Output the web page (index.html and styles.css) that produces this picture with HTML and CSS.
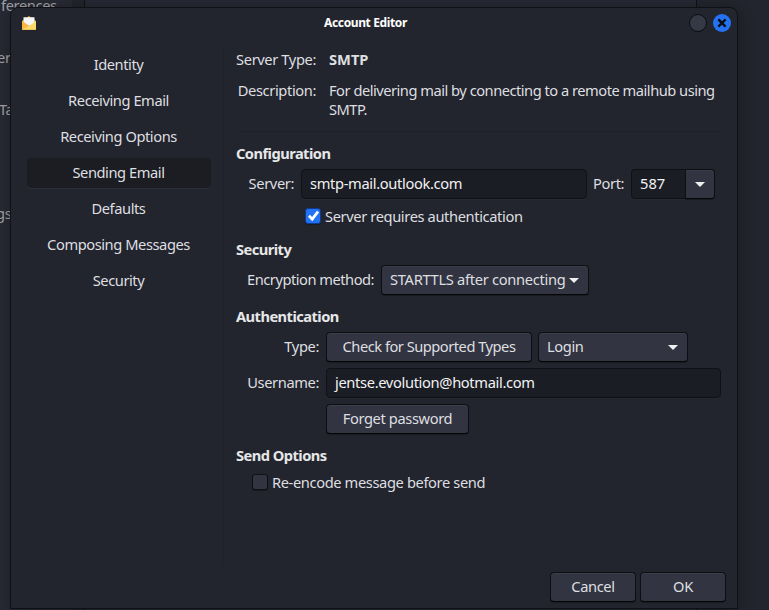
FILE: index.html
```html
<!DOCTYPE html>
<html lang="en">
<head>
<meta charset="utf-8">
<title>Account Editor</title>
<link rel="stylesheet" href="styles.css">
</head>
<body>
<div class="backdrop">
  <div class="back-side">
    <span class="ghost ghost-a">ferences</span>
    <span class="ghost ghost-b">er</span>
    <span class="ghost ghost-c">Ta</span>
    <span class="ghost ghost-d">gs</span>
  </div>
  <div class="back-scroll"></div>
  <div class="back-main"></div>
</div>
<main class="dialog">
  <header class="titlebar">
    <svg class="app-icon" width="14" height="14" viewBox="0 0 14 14">
      <path d="M0 5 7 0l7 5v3H0z" fill="#d9a520"/>
      <path d="M1.5 1.2h11V8L7 10 1.5 8z" fill="#f6f5f8"/>
      <path d="M0 5l7 5 7-5v9H0z" fill="#fbdc6b"/>
      <path d="M0 5l7 4.7L0 14z" fill="#f9b545"/>
      <path d="M0 13.3h14v.7H0z" fill="#e8b84b"/>
    </svg>
    <h1 class="title">Account Editor</h1>
    <div class="window-buttons">
      <span class="win-btn"></span>
      <span class="win-btn close"><svg width="18" height="18" viewBox="0 0 18 18"><path d="M6.2 6.2l5.6 5.6M11.8 6.2l-5.6 5.6" stroke="#0b0d12" stroke-width="2.4" stroke-linecap="square"/></svg></span>
    </div>
  </header>
  <div class="body">
    <nav class="sidebar">
      <a class="tab">Identity</a>
      <a class="tab">Receiving Email</a>
      <a class="tab">Receiving Options</a>
      <a class="tab active">Sending Email</a>
      <a class="tab">Defaults</a>
      <a class="tab">Composing Messages</a>
      <a class="tab">Security</a>
    </nav>
    <section class="page">
      <dl class="summary">
        <dt>Server Type:</dt><dd class="strong">SMTP</dd>
        <dt>Description:</dt><dd class="tight">For delivering mail by connecting to a remote mailhub using<br>SMTP.</dd>
      </dl>
      <h2 class="heading">Configuration</h2>
      <div class="row server-row">
        <span class="label">Server:</span>
        <div class="entry server">smtp-mail.outlook.com</div>
        <span class="label port-label">Port:</span>
        <div class="combo-entry"><div class="entry port">587</div><div class="button drop"><i class="arrow"></i></div></div>
      </div>
      <div class="row check-row auth">
        <span class="check on"><svg width="14" height="14" viewBox="0 0 14 14"><path d="M3 6.7l3.2 3.4L12 2.6" fill="none" stroke="#fff" stroke-width="2.7"/></svg></span>
        <span class="check-label">Server requires authentication</span>
      </div>
      <h2 class="heading">Security</h2>
      <div class="row">
        <span class="label enc-label tight">Encryption method:</span>
        <div class="button combo enc"><span>STARTTLS after connecting</span><i class="arrow"></i></div>
      </div>
      <h2 class="heading">Authentication</h2>
      <div class="auth-grid">
        <span class="label">Type:</span>
        <div class="type-row">
          <div class="button check-types tight">Check for Supported Types</div>
          <div class="button combo login"><span>Login</span><i class="arrow"></i></div>
        </div>
        <span class="label">Username:</span>
        <div class="entry user">jentse.evolution@hotmail.com</div>
        <div class="button forget">Forget password</div>
      </div>
      <h2 class="heading">Send Options</h2>
      <div class="row check-row reencode">
        <span class="check"></span>
        <span class="check-label">Re-encode message before send</span>
      </div>
    </section>
  </div>
  <footer class="actions">
    <div class="button action">Cancel</div>
    <div class="button action">OK</div>
  </footer>
</main>
</body>
</html>
```

FILE: styles.css
```css
* { box-sizing: border-box; margin: 0; padding: 0; }
body {
  width: 769px; height: 610px; overflow: hidden; position: relative;
  background: #23252e; color: #dedfe0;
  font: 14.67px/20px "Noto Sans", sans-serif;
  letter-spacing: -0.38px;
}
.tight { letter-spacing: -0.49px; }
.backdrop { position: absolute; inset: 0; display: flex; }
.back-side { width: 72px; background: #272934; position: relative; }
.back-scroll { width: 13px; background: #22242c; border-right: 1px solid #111318; }
.back-main { width: 612px; background: #262833; border-right: 1px solid #0f1116; }
.ghost { position: absolute; color: #a2a3a7; white-space: nowrap; }
.ghost-a { left: 1px; top: -5px; }
.ghost-b { left: -3px; top: 47px; }
.ghost-c { left: -1px; top: 99px; }
.ghost-d { left: -4px; top: 203px; }
.dialog {
  position: relative; display: flex; flex-direction: column;
  width: 728px; height: 602px; margin: 7px 0 0 10px;
  background: #23252e; border: 1px solid #0f1116;
  border-radius: 8px 8px 0 0;
  box-shadow: 0 2px 16px rgba(0,0,0,.3);
}
.titlebar {
  display: grid; grid-template-columns: 60px 1fr 60px; align-items: center;
  height: 30px; padding: 0 6px 0 11px;
}
.title {
  text-align: center; font-size: 12px; line-height: 20px; font-weight: 700; color: #fff;
  padding-right: 22px;
}
.window-buttons { display: flex; gap: 6px; justify-content: flex-end; }
.win-btn { width: 18px; height: 18px; border-radius: 50%; background: #353945; border: 1px solid #0b0d11; }
.win-btn.close { background: #2472f4; border: 0; }
.win-btn svg, .app-icon, .check svg { display: block; }
.body { display: flex; height: 528px; }
.sidebar {
  flex: none; width: 213px; height: 518px; margin-top: 10px; padding: 2px 12px 0 16px;
  border-right: 1px solid #20222a; display: flex; flex-direction: column; gap: 6px;
}
.tab { height: 30px; line-height: 29px; padding-right: 1px; letter-spacing: -0.43px; text-align: center; border-radius: 4px; }
.tab.active { background: #1b1d23; box-shadow: 0 1px #2d2f38; }
.page { flex: 1; min-width: 0; padding: 11px 16px 0 12px; }
.summary {
  display: grid; grid-template-columns: 81px 1fr; column-gap: 12px; row-gap: 12px;
  line-height: 19px; padding-top: 1px; height: 83px; align-content: start;
  border-bottom: 1px solid #1f2128;
}
.summary dt { text-align: right; white-space: nowrap; padding-right: 1px; }
.summary dd { white-space: nowrap; }
.strong { font-weight: 700; letter-spacing: 0; }
.heading {
  font-size: 14.67px; line-height: 20px; font-weight: 700; color: #e6e7e8;
  letter-spacing: -0.54px; padding: 11px 0 1px;
}
.row { display: flex; align-items: center; }
.label { white-space: nowrap; text-align: right; padding: 0 1px 2px 0; }
.entry {
  height: 30px; line-height: 26px; padding-left: 8px; color: #f2f2f3; white-space: nowrap;
  letter-spacing: -0.34px;
  background: #1b1d24; border: 1px solid #0f1116; border-radius: 4px; box-shadow: 0 1px #282a33;
}
.button {
  height: 30px; line-height: 27px; text-align: center; white-space: nowrap;
  background: #323541; border: 1px solid #0d0f13; border-bottom-color: #050608; border-radius: 4px;
  box-shadow: inset 0 1px #3b3e4a, 0 1px 1px rgba(0,0,0,.3);
}
.arrow { border: 5px solid transparent; border-top-color: #f0f0f0; border-bottom: 0; width: 0; height: 0; }
.server-row { margin-top: 5px; }
.server-row > .label:first-child { width: 59px; }
.entry.server { width: 286px; margin-left: 6px; }
.port-label { margin: 0 6px; width: 32px; }
.combo-entry { display: flex; }
.entry.port { width: 54px; border-right: 0; border-radius: 4px 0 0 4px; letter-spacing: 0; }
.drop { width: 30px; display: flex; align-items: center; justify-content: center; border-radius: 0 4px 4px 0; padding-right: 1px; }
.check-row { height: 16px; }
.check {
  width: 16px; height: 16px; border-radius: 3px; flex: none;
  background: #323541; border: 1px solid #0d0f13; box-shadow: 0 1px 1px rgba(0,0,0,.3);
}
.check.on { background: #2472f4; border-color: #0f3b8c; }
.check-label { margin-left: 4px; white-space: nowrap; }
.auth { margin: 9px 0 0 69px; }
.auth + .heading { padding-top: 15px; }
.heading + .row:not(.server-row):not(.check-row) { margin-top: 5px; }
.enc-label { width: 139px; margin-right: 6px; }
.combo { display: flex; align-items: center; justify-content: space-between; padding: 0 9px 0 8px; }
.combo span { padding-bottom: 1px; }
.enc { width: 208px; letter-spacing: -0.3px; }
.auth-grid {
  margin-top: 5px; display: grid; grid-template-columns: 84px 1fr; column-gap: 6px; row-gap: 6px;
  align-items: center;
}
.type-row { display: flex; gap: 6px; }
.check-types { width: 206px; }
.login { width: 150px; }
.forget { grid-column: 2; width: 143px; }
.reencode { margin: 8px 0 0 16px; }
.actions { display: flex; gap: 4px; justify-content: flex-end; padding: 6px 11px 0; }
.action { width: 86px; }
```
